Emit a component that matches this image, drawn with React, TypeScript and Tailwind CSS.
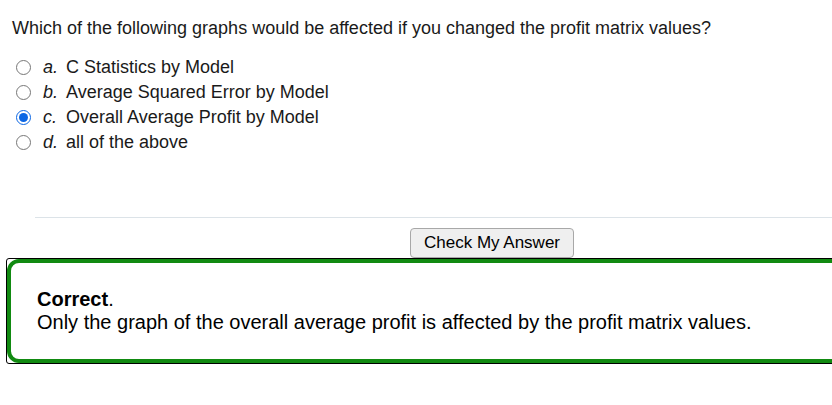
import React, { useState } from "react";

const OPTIONS = [
  { key: "a", label: "C Statistics by Model" },
  { key: "b", label: "Average Squared Error by Model" },
  { key: "c", label: "Overall Average Profit by Model" },
  { key: "d", label: "all of the above" },
];

export default function App() {
  const [picked, setPicked] = useState("c");

  return (
    <div className="w-[832px] h-[405px] overflow-hidden bg-white text-[#1a1a1a] font-['Liberation_Sans',Arial,sans-serif]">
      <p className="pl-3 pt-[16px] text-[18px] leading-[24px]">
        Which of the following graphs would be affected if you changed the profit matrix values?
      </p>
      <div className="mt-[15px] pl-[16px] flex flex-col">
        {OPTIONS.map((o) => (
          <label key={o.key} className="flex items-center h-[25px] cursor-pointer">
            <input
              type="radio"
              name="q"
              checked={picked === o.key}
              onChange={() => setPicked(o.key)}
              className="w-[15px] h-[15px] m-0 accent-[#0b66e4]"
            />
            <span className="italic ml-[12px] w-[23px] text-[18px]">{o.key}.</span>
            <span className="text-[18px]">{o.label}</span>
          </label>
        ))}
      </div>
      <div className="mt-[62px] ml-[35px] border-t border-[#dce3e8]" />
      <div className="flex justify-center pl-[152px] mt-[10px]">
        <button className="h-[30px] px-[13px] text-[17px] bg-[#efefef] border border-[#a8a8a8] rounded-[4px] text-black">
          Check My Answer
        </button>
      </div>
      <div className="ml-[6px] -mr-[20px] border border-black rounded-[3px]">
        <div className="border-[4px] border-[#118a11] rounded-[12px] pl-[26px] pt-[25px] pb-[25px] text-[20px] leading-[23px] text-black">
          <div>
            <b>Correct</b>.
          </div>
          <div>Only the graph of the overall average profit is affected by the profit matrix values.</div>
        </div>
      </div>
    </div>
  );
}
